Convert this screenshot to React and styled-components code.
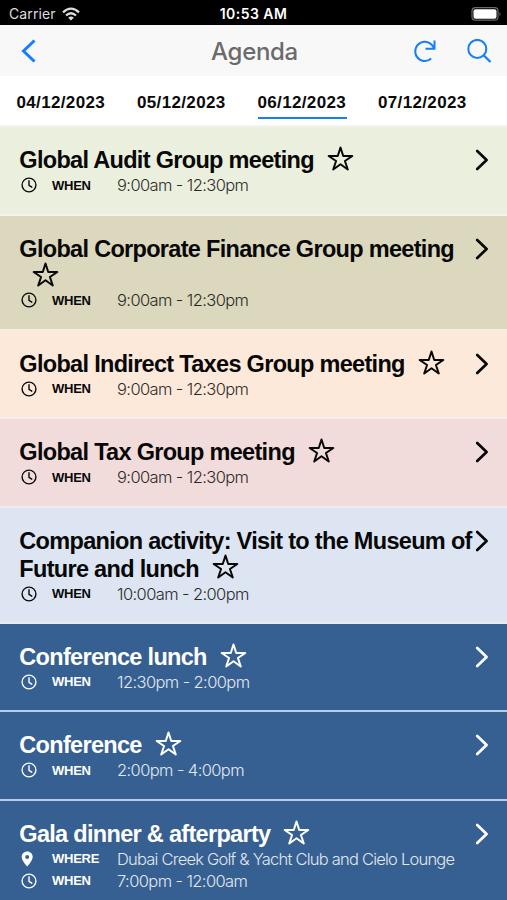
import React from 'react';
import styled, { createGlobalStyle } from 'styled-components';

const blue = '#157efb';

const GlobalStyle = createGlobalStyle`
  body {
    margin: 0;
    background: #fff;
  }
`

const Screen = styled.div`
  display: flex;
  flex-direction: column;
  width: 507px;
  height: 900px;
  overflow: hidden;
  font-family: "Liberation Sans", Arial, sans-serif;

  svg {
    display: block;
    flex: none;
    fill: none;
    stroke: currentColor;
  }
`

const StatusBar = styled.div`
  display: grid;
  grid-template-columns: 1fr auto 1fr;
  align-items: center;
  flex: none;
  height: 25px;
  padding: 2px 5px 0 9px;
  box-sizing: border-box;
  background: #000;
  color: #fff;
  font: 500 14px Inter, sans-serif;
`

const Carrier = styled.div`
  display: flex;
  align-items: center;
  gap: 6px;
  color: #ddd;
  font-weight: 400;
  letter-spacing: 0.1px;
`

const Clock = styled.div`
  padding-right: 4px;
  font-weight: 600;
  letter-spacing: 0.45px;
`

const Battery = styled.div`
  display: flex;
  justify-content: flex-end;
`

const NavBar = styled.header`
  display: grid;
  grid-template-columns: 1fr auto 1fr;
  align-items: center;
  flex: none;
  height: 51px;
  padding: 1px 15px 0 20px;
  box-sizing: border-box;
  background: #f8f8f8;
  color: ${blue};
`

const NavTitle = styled.h1`
  margin: 0;
  padding-right: 3px;
  color: #6b6b6b;
  font: 500 24px Inter, sans-serif;
  letter-spacing: -0.3px;
`

const NavActions = styled.div`
  display: flex;
  justify-content: flex-end;
  gap: 29px;
`

const Tabs = styled.nav`
  display: flex;
  flex: none;
  gap: 31.5px;
  height: 49px;
  padding: 12px 0 0 16.5px;
  box-sizing: border-box;
`

const Tab = styled.div`
  width: 89px;
  height: 31px;
  box-sizing: border-box;
  border-bottom: 2px solid ${props => props.$active ? blue : 'transparent'};
  color: #0a0a0a;
  font-size: 17px;
  font-weight: 700;
  line-height: 29px;
  letter-spacing: 0.35px;
  white-space: nowrap;
`

const List = styled.main`
  border-top: 2px solid #f3f4ee;
`

const Row = styled.article`
  display: flex;
  justify-content: space-between;
  height: ${props => props.$height}px;
  padding: 19px 18px 0 20px;
  box-sizing: border-box;
  border-bottom: 2px solid ${props => props.$line};
  background: ${props => props.$bg};
  color: ${props => props.$dark ? '#fff' : '#080808'};
`

const Details = styled.div`
  width: 454px;
`

const Title = styled.h2`
  margin: 0 0 ${props => props.$tight ? '-1.5px' : '0'} -0.7px;
  font-size: 23.5px;
  line-height: 28px;
  letter-spacing: -0.69px;

  svg {
    display: inline-block;
    margin: -7px 0 0 13px;
    vertical-align: middle;
  }
`

const Meta = styled.div`
  display: grid;
  grid-template-columns: 32px 65px 1fr;
  align-items: center;
  height: 22px;
`

const Label = styled.span`
  font-size: 13px;
  font-weight: 700;
  letter-spacing: -0.25px;
`

const Value = styled.span`
  font-family: Inter, sans-serif;
  font-size: 16.5px;
  font-weight: 300;
  letter-spacing: ${props => props.$time ? '-0.6px' : '-0.78px'};
  line-height: 22px;
  white-space: nowrap;
  opacity: 0.85;
`

const Arrow = styled.div`
  padding-top: 3px;
`

const StarIcon = () => (
    <svg width="27" height="27" viewBox="0 0 512 512" strokeWidth="38" strokeLinejoin="round">
        <path d="M480 208H308L256 48l-52 160H32l140 96-54 160 138-100 138 100-54-160z" />
    </svg>
);

const ClockIcon = () => (
    <svg width="18" height="18" viewBox="0 0 18 18" strokeWidth="1.4" strokeLinecap="round" strokeLinejoin="round">
        <circle cx="9" cy="9" r="6.9" />
        <path d="M9 4.8V9.4L11.8 11.2" />
    </svg>
);

const PinIcon = () => (
    <svg width="18" height="18" viewBox="0 0 18 18">
        <path
            fill="currentColor"
            fillRule="evenodd"
            stroke="none"
            d="M7.2 1.5C4.1 1.5 1.7 3.8 1.7 6.7c0 3.4 4 8.3 5.5 9.8 1.5-1.5 5.5-6.4 5.5-9.8 0-2.9-2.4-5.2-5.5-5.2zM7.2 4.9a2 2 0 1 1 0 4 2 2 0 0 1 0-4z"
        />
    </svg>
);

const ForwardIcon = () => (
    <svg width="14" height="22" viewBox="0 0 14 22" strokeWidth="2.7" strokeLinecap="round" strokeLinejoin="round">
        <path d="M2.2 2 11.6 11 2.2 20" />
    </svg>
);

const BackIcon = () => (
    <svg width="18" height="24" viewBox="0 0 18 24" strokeWidth="3">
        <path d="M14.5 1.5 3.5 12 14.5 22.5" />
    </svg>
);

const RefreshIcon = () => (
    <svg width="24" height="24" viewBox="0 0 24 24" strokeWidth="2">
        <path d="M20.8 9A9.6 9.6 0 1 0 18.2 19.6" />
        <path d="M21.5 1.5V9.7H12.5" />
    </svg>
);

const SearchIcon = () => (
    <svg width="26" height="24" viewBox="0 0 26 24" strokeWidth="2">
        <circle cx="11.3" cy="9.9" r="9" />
        <path d="M17.6 16.2 24.5 23" strokeWidth="2.3" />
    </svg>
);

const WifiIcon = () => (
    <svg width="18" height="14" viewBox="0 0 18 14" strokeWidth="2.3">
        <path d="M1 5.3Q9-2 17 5.3" />
        <path d="M4 8.5Q9 4 14 8.5" />
        <path d="M6.2 10.7Q9 8.3 11.8 10.7L9 13.5Z" fill="currentColor" stroke="none" />
    </svg>
);

const BatteryIcon = () => (
    <svg width="31" height="14" viewBox="0 0 31 14">
        <rect x="1" y="0.7" width="26" height="12.5" rx="3.5" stroke="#6b6b6b" strokeWidth="1.2" />
        <rect x="2.5" y="2.2" width="23" height="9.5" rx="2" fill="#fff" stroke="none" />
        <path d="M28.5 4.7Q30.5 7 28.5 9.3Z" fill="#6b6b6b" stroke="none" />
    </svg>
);

const days = ['04/12/2023', '05/12/2023', '06/12/2023', '07/12/2023'];

const sessions = [
    { title: 'Global Audit Group meeting', when: '9:00am - 12:30pm', bg: '#ebf0de', line: '#f3f3ea', height: 88.6 },
    { title: 'Global Corporate Finance Group meeting', when: '9:00am - 12:30pm', bg: '#dbd8be', line: '#f4eee5', height: 115.2, tight: true },
    { title: 'Global Indirect Taxes Group meeting', when: '9:00am - 12:30pm', bg: '#fce9da', line: '#f6eeeb', height: 88.4 },
    { title: 'Global Tax Group meeting', when: '9:00am - 12:30pm', bg: '#f2dcdb', line: '#f0eaef', height: 88.4 },
    { title: 'Companion activity: Visit to the Museum of Future and lunch', when: '10:00am - 2:00pm', bg: '#dce5f1', line: '#e7edf4', height: 116.4 },
    { title: 'Conference lunch', when: '12:30pm - 2:00pm', bg: '#376092', line: '#b9cbe8', height: 88.4, dark: true },
    { title: 'Conference', when: '2:00pm - 4:00pm', bg: '#376092', line: '#b9cbe8', height: 88.4, dark: true },
    { title: 'Gala dinner & afterparty', where: 'Dubai Creek Golf & Yacht Club and Cielo Lounge', when: '7:00pm - 12:00am', bg: '#376092', line: '#b9cbe8', height: 110.4, dark: true },
];

const Session = ({ session }) => (
    <Row $bg={session.bg} $line={session.line} $height={session.height} $dark={session.dark}>
        <Details>
            {/* no space before the star, its margin is the gap on either line */}
            <Title $tight={session.tight}>
                {session.title}
                <StarIcon />
            </Title>
            {session.where && (
                <Meta>
                    <PinIcon />
                    <Label>WHERE</Label>
                    <Value>{session.where}</Value>
                </Meta>
            )}
            <Meta>
                <ClockIcon />
                <Label>WHEN</Label>
                <Value $time>{session.when}</Value>
            </Meta>
        </Details>
        <Arrow>
            <ForwardIcon />
        </Arrow>
    </Row>
);

const App = () => (
    <Screen>
        <GlobalStyle />
        <StatusBar>
            <Carrier>
                Carrier
                <WifiIcon />
            </Carrier>
            <Clock>10:53 AM</Clock>
            <Battery>
                <BatteryIcon />
            </Battery>
        </StatusBar>
        <NavBar>
            <BackIcon />
            <NavTitle>Agenda</NavTitle>
            <NavActions>
                <RefreshIcon />
                <SearchIcon />
            </NavActions>
        </NavBar>
        <Tabs>
            {days.map(day => (
                <Tab key={day} $active={day === '06/12/2023'}>{day}</Tab>
            ))}
        </Tabs>
        <List>
            {sessions.map(session => (
                <Session key={session.title} session={session} />
            ))}
        </List>
    </Screen>
);

export default App;
